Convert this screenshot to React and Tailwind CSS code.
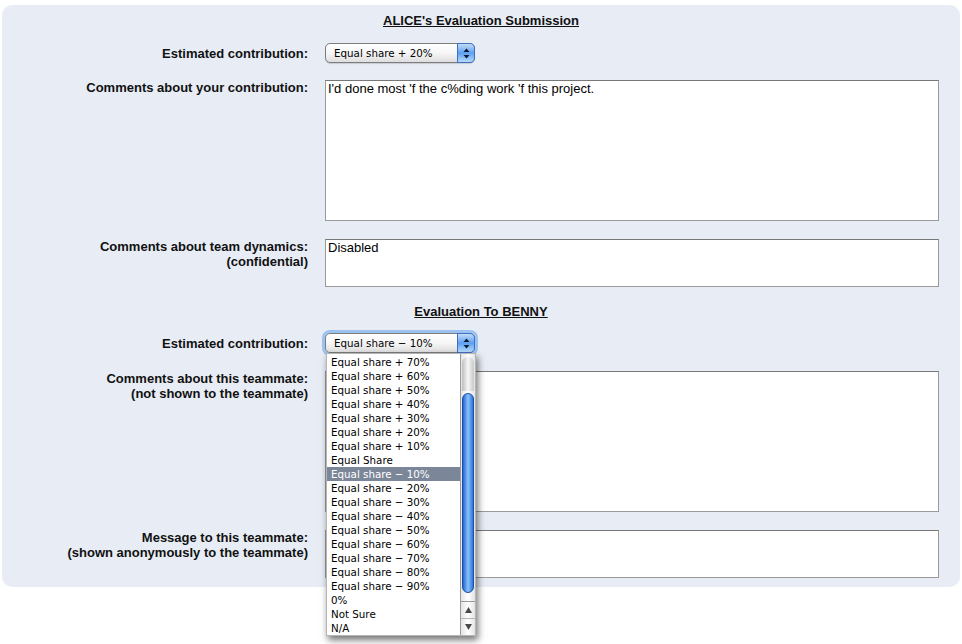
import React from 'react';

const options = [
  'Equal share + 70%',
  'Equal share + 60%',
  'Equal share + 50%',
  'Equal share + 40%',
  'Equal share + 30%',
  'Equal share + 20%',
  'Equal share + 10%',
  'Equal Share',
  'Equal share − 10%',
  'Equal share − 20%',
  'Equal share − 30%',
  'Equal share − 40%',
  'Equal share − 50%',
  'Equal share − 60%',
  'Equal share − 70%',
  'Equal share − 80%',
  'Equal share − 90%',
  '0%',
  'Not Sure',
  'N/A',
];

const uiFont = { fontFamily: '"DejaVu Sans", "Liberation Sans", sans-serif' };

const Arrows = () => (
  <svg width="7" height="11" viewBox="0 0 7 11">
    <path d="M3.5 0.5 L6.5 4 L0.5 4 Z" fill="#0b1a33" />
    <path d="M3.5 10.5 L6.5 7 L0.5 7 Z" fill="#0b1a33" />
  </svg>
);

const AquaSelect = ({ value, focused, children }) => (
  <div
    className={`relative flex h-[20px] w-[150px] items-center rounded-[5px] border border-[#7d7d7d] bg-gradient-to-b from-white via-[#f6f6f6] to-[#dedede] ${
      focused ? 'shadow-[0_0_0_3px_#9cc2ef]' : 'shadow-[0_1px_1px_rgba(0,0,0,0.15)]'
    }`}
  >
    <span className="pl-[8px] text-[10.3px] leading-none text-black" style={uiFont}>
      {value}
    </span>
    <div className="absolute inset-y-[-1px] right-[-1px] flex w-[18px] items-center justify-center rounded-r-[5px] border border-[#3f6fc4] bg-gradient-to-b from-[#c4dcf8] via-[#5d9ff0] to-[#b6dbfb]">
      <Arrows />
    </div>
    {children}
  </div>
);

const DropList = () => (
  <div className="absolute left-0 top-[19px] z-10 flex h-[283px] w-[150px] border border-[#b5b5b5] bg-white shadow-[2px_4px_7px_rgba(0,0,0,0.55)]">
    <ul className="flex-1 pt-[1px]" style={uiFont}>
      {options.map((opt, i) => (
        <li
          key={opt}
          className={`h-[14px] pl-[4px] text-[10.3px] leading-[14px] ${
            i === 8 ? 'bg-[#7b8699] text-white' : 'text-black'
          }`}
        >
          {opt}
        </li>
      ))}
    </ul>
    {/* scrollbar */}
    <div className="flex w-[15px] flex-col border-l border-[#9a9a9a] bg-gradient-to-r from-[#e4e4e4] via-white to-[#e4e4e4]">
      <div className="mx-[1px] mt-[3px] h-[34px] rounded-t-full bg-gradient-to-r from-[#bdbdbd] via-[#f7f7f7] to-[#c8c8c8]" />
      <div className="mx-[1px] mt-[2px] h-[200px] rounded-full border border-[#1b4fa8] bg-gradient-to-r from-[#1f63d6] via-[#8cc3f7] to-[#2c73dc]" />
      <div className="mt-auto flex flex-col">
        <div className="flex h-[17px] items-center justify-center border-t border-[#9a9a9a]">
          <svg width="7" height="6" viewBox="0 0 7 6">
            <path d="M3.5 0 L7 6 L0 6 Z" fill="#4a4a4a" />
          </svg>
        </div>
        <div className="flex h-[17px] items-center justify-center border-t border-[#b5b5b5]">
          <svg width="7" height="6" viewBox="0 0 7 6">
            <path d="M3.5 6 L7 0 L0 0 Z" fill="#4a4a4a" />
          </svg>
        </div>
      </div>
    </div>
  </div>
);

const Row = ({ label, sub, center, mt, children }) => (
  <div className={`flex ${center ? 'items-center' : 'items-start'} ${mt}`}>
    <div className="w-[306px] shrink-0 text-right font-bold leading-[15px]">
      <div>{label}</div>
      {sub && <div>{sub}</div>}
    </div>
    <div className="ml-[17px]">{children}</div>
  </div>
);

const Box = ({ h, text }) => (
  <div
    className={`w-[614px] ${h} border border-[#9a9a9a] border-t-[#777] bg-white px-[2px] text-[13px] leading-[15px] text-black`}
  >
    {text}
  </div>
);

export default function App() {
  return (
    <div
      className="min-h-[644px] bg-white pt-[5px] pl-[2px] text-[13px] text-[#111]"
      style={{ fontFamily: '"Liberation Sans", Arial, sans-serif' }}
    >
      <div className="w-[958px] rounded-[10px] bg-[#e8edf5] pb-[9px] pt-[8px]">
        <h2 className="text-center font-bold leading-[15px] underline">ALICE's Evaluation Submission</h2>

        <Row label="Estimated contribution:" center mt="mt-[15px]">
          <AquaSelect value="Equal share + 20%" />
        </Row>

        <Row label="Comments about your contribution:" mt="mt-[17px]">
          <Box h="h-[141px]" text="I'd done most 'f the c%ding work 'f this project." />
        </Row>

        <Row label="Comments about team dynamics:" sub="(confidential)" mt="mt-[18px]">
          <Box h="h-[48px]" text="Disabled" />
        </Row>

        <h2 className="mt-[17px] text-center font-bold leading-[15px] underline">Evaluation To BENNY</h2>

        <Row label="Estimated contribution:" center mt="mt-[14px]">
          <AquaSelect value="Equal share − 10%" focused>
            <DropList />
          </AquaSelect>
        </Row>

        <Row label="Comments about this teammate:" sub="(not shown to the teammate)" mt="mt-[18px]">
          <Box h="h-[141px]" text="" />
        </Row>

        <Row label="Message to this teammate:" sub="(shown anonymously to the teammate)" mt="mt-[18px]">
          <Box h="h-[48px]" text="" />
        </Row>
      </div>
    </div>
  );
}
